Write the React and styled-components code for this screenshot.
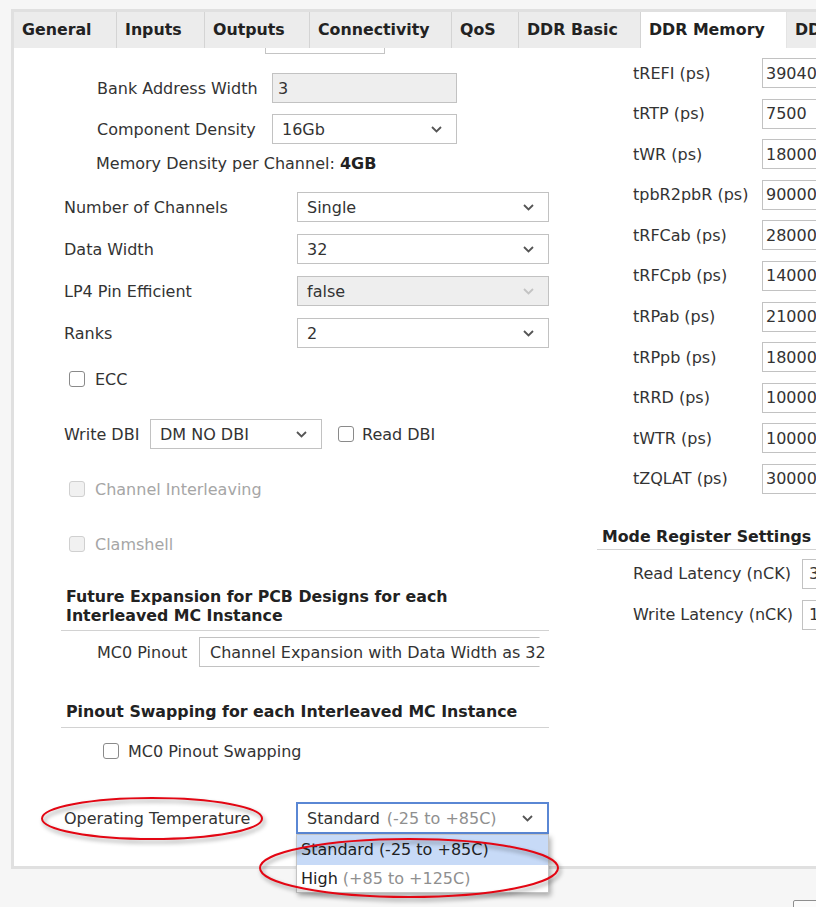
import React from 'react';
import styled, { createGlobalStyle } from 'styled-components';

const GlobalStyle = createGlobalStyle`
  html, body {
    margin: 0;
    padding: 0;
    background: #f6f6f6;
    overflow: hidden;
  }
  body {
    font-family: "DejaVu Sans", Verdana, sans-serif;
    font-size: 16px;
    color: #333;
  }
`;

const Page = styled.div`
  position: relative;
  width: 816px;
  height: 907px;
  padding: 9px 0 0 11px;
  box-sizing: border-box;
  overflow: hidden;
`;

const Panel = styled.div`
  width: 900px;
  border: 3px solid #e0e0e0;
  border-right: none;
  background: #fff;
`;

const TabBar = styled.div`
  display: flex;
  height: 36px;
  background: #ececec;
`;

const Tab = styled.div`
  flex: none;
  width: ${(p) => p.$w}px;
  box-sizing: border-box;
  padding-left: 8px;
  line-height: 36px;
  font-weight: bold;
  font-size: 15.8px;
  color: #222;
  white-space: nowrap;
  background: ${(p) => (p.$active ? '#fff' : 'transparent')};
  border-right: 1px solid ${(p) => (p.$active ? '#e4e4e4' : '#d4d4d4')};
`;

const Content = styled.div`
  display: flex;
  height: 818px;
`;

const LeftColumn = styled.div`
  width: 587px;
  flex: none;
`;

const RightColumn = styled.div`
  flex: 1;
  padding-top: 10px;
`;

const CutField = styled.div`
  margin-left: 251px;
  width: 120px;
  height: 6px;
  border: 1px solid #c4c4c4;
  border-top: none;
  box-sizing: border-box;
`;

const Row = styled.div`
  display: flex;
  align-items: center;
  height: ${(p) => p.$h || 30}px;
  margin-top: ${(p) => p.$mt || 0}px;
  padding-left: ${(p) => p.$indent || 0}px;
  white-space: nowrap;
`;

const Label = styled.span`
  flex: none;
  width: ${(p) => (p.$w ? `${p.$w}px` : 'auto')};
  color: ${(p) => (p.$disabled ? '#a6a6a6' : '#333')};
`;

const Field = styled.div`
  flex: none;
  position: relative;
  display: flex;
  align-items: center;
  justify-content: space-between;
  box-sizing: border-box;
  width: ${(p) => p.$w}px;
  height: ${(p) => p.$h || 30}px;
  padding: 0 14px 0 ${(p) => p.$pad ?? 9}px;
  border: ${(p) => (p.$focus ? '2px solid #5a87d4' : '1px solid #c2c2c2')};
  border-right-color: ${(p) => (p.$open ? 'transparent' : p.$focus ? '#5a87d4' : '#c2c2c2')};
  background: ${(p) => (p.$disabled ? '#eeeeee' : '#fff')};
  color: #333;
`;

const Muted = styled.span`
  color: #8f8f8f;
  margin-left: ${(p) => p.$gap || 0}px;
`;

const Bold = styled.b`
  color: #222;
`;

const Box = styled.span`
  flex: none;
  width: 16px;
  height: 16px;
  box-sizing: border-box;
  border: 1.5px solid ${(p) => (p.$disabled ? '#d0d0d0' : '#8a8a8a')};
  border-radius: 3px;
  background: ${(p) => (p.$disabled ? '#f1f1f1' : '#fff')};
  margin-right: ${(p) => p.$gap || 10}px;
  margin-left: ${(p) => p.$left || 0}px;
`;

const Heading = styled.div`
  margin-top: ${(p) => p.$mt}px;
  margin-left: ${(p) => p.$left}px;
  width: ${(p) => p.$w}px;
  padding: 0 0 ${(p) => p.$pb || 5}px ${(p) => p.$pl || 5}px;
  box-sizing: border-box;
  border-bottom: 1px solid #d2d2d2;
  font-weight: bold;
  font-size: 15.8px;
  color: #222;
  line-height: 19px;
  white-space: nowrap;
`;

const SelectWrap = styled.div`
  position: relative;
`;

const Popup = styled.div`
  position: absolute;
  top: 100%;
  left: 0;
  width: 253px;
  box-sizing: border-box;
  border: 1px solid #c4c4c4;
  background: #fff;
  box-shadow: 2px 3px 5px rgba(0, 0, 0, 0.3);
  z-index: 2;
`;

const Option = styled.div`
  height: ${(p) => p.$h}px;
  line-height: ${(p) => p.$h}px;
  padding-left: 4px;
  background: ${(p) => (p.$selected ? '#c7daf7' : '#fff')};
  color: #222;
`;

const Footer = styled.div`
  padding: 31px 0 0 782px;
`;

const FooterButton = styled.div`
  width: 80px;
  height: 30px;
  border: 1px solid #8e8e8e;
  border-radius: 2px;
  background: #fbfbfb;
`;

const Annotation = styled.svg`
  position: absolute;
  left: ${(p) => p.$x}px;
  top: ${(p) => p.$y}px;
  overflow: visible;
  pointer-events: none;
  filter: drop-shadow(2px 3px 2px rgba(0, 0, 0, 0.4));
  z-index: 3;
`;

const Chevron = ({ disabled }) => (
  <svg width="11" height="7" viewBox="0 0 11 7">
    <polyline
      points="1,1 5.5,5.5 10,1"
      fill="none"
      stroke={disabled ? '#c3c3c3' : '#555'}
      strokeWidth="1.8"
    />
  </svg>
);

const Select = ({ w, value, disabled, children }) => (
  <Field $w={w} $disabled={disabled}>
    <span>{children || value}</span>
    <Chevron disabled={disabled} />
  </Field>
);

const Ellipse = ({ x, y, w, h }) => (
  <Annotation $x={x} $y={y} width={w} height={h}>
    <ellipse cx={w / 2} cy={h / 2} rx={w / 2 - 1} ry={h / 2 - 1} fill="none" stroke="#e30613" strokeWidth="2" />
  </Annotation>
);

const tabs = [
  { name: 'General', w: 103 },
  { name: 'Inputs', w: 88 },
  { name: 'Outputs', w: 105 },
  { name: 'Connectivity', w: 142 },
  { name: 'QoS', w: 67 },
  { name: 'DDR Basic', w: 122 },
  { name: 'DDR Memory', w: 146, active: true },
  { name: 'DDR Advanced', w: 150 },
];

const timings = [
  ['tREFI (ps)', '39040'],
  ['tRTP (ps)', '7500'],
  ['tWR (ps)', '18000'],
  ['tpbR2pbR (ps)', '90000'],
  ['tRFCab (ps)', '280000'],
  ['tRFCpb (ps)', '140000'],
  ['tRPab (ps)', '21000'],
  ['tRPpb (ps)', '18000'],
  ['tRRD (ps)', '10000'],
  ['tWTR (ps)', '10000'],
  ['tZQLAT (ps)', '30000'],
];

const App = () => (
  <Page>
    <GlobalStyle />
    <Panel>
      <TabBar>
        {tabs.map((t) => (
          <Tab key={t.name} $w={t.w} $active={t.active}>
            {t.name}
          </Tab>
        ))}
      </TabBar>
      <Content>
        <LeftColumn>
          <CutField />
          <Row $mt={19} $indent={83}>
            <Label $w={175}>Bank Address Width</Label>
            <Field $w={185} $pad={5} $disabled>3</Field>
          </Row>
          <Row $mt={11} $indent={83}>
            <Label $w={175}>Component Density</Label>
            <Select w={185} value="16Gb" />
          </Row>
          <Row $mt={9} $h={20} $indent={82}>
            <Label>
              Memory Density per Channel: <Bold>4GB</Bold>
            </Label>
          </Row>
          <Row $mt={19} $indent={50}>
            <Label $w={233}>Number of Channels</Label>
            <Select w={252} value="Single" />
          </Row>
          <Row $mt={12} $indent={50}>
            <Label $w={233}>Data Width</Label>
            <Select w={252} value="32" />
          </Row>
          <Row $mt={12} $indent={50}>
            <Label $w={233}>LP4 Pin Efficient</Label>
            <Select w={252} value="false" disabled />
          </Row>
          <Row $mt={12} $indent={50}>
            <Label $w={233}>Ranks</Label>
            <Select w={252} value="2" />
          </Row>
          <Row $mt={21} $h={20} $indent={55}>
            <Box />
            <Label>ECC</Label>
          </Row>
          <Row $mt={30} $indent={50}>
            <Label $w={86}>Write DBI</Label>
            <Select w={172} value="DM NO DBI" />
            <Box $left={16} $gap={8} />
            <Label>Read DBI</Label>
          </Row>
          <Row $mt={30} $h={20} $indent={55}>
            <Box $disabled />
            <Label $disabled>Channel Interleaving</Label>
          </Row>
          <Row $mt={35} $h={20} $indent={55}>
            <Box $disabled />
            <Label $disabled>Clamshell</Label>
          </Row>
          <Heading $mt={33} $left={47} $w={488} $pl={5} $pb={5}>
            Future Expansion for PCB Designs for each
            <br />
            Interleaved MC Instance
          </Heading>
          <Row $mt={6} $indent={83}>
            <Label $w={102}>MC0 Pinout</Label>
            <Field $w={341} $pad={10} $open>Channel Expansion with Data Width as 32</Field>
          </Row>
          <Heading $mt={35} $left={47} $w={488} $pl={5} $pb={6}>
            Pinout Swapping for each Interleaved MC Instance
          </Heading>
          <Row $mt={13} $h={20} $indent={89}>
            <Box $gap={9} />
            <Label>MC0 Pinout Swapping</Label>
          </Row>
          <Row $mt={41} $h={32} $indent={50}>
            <Label $w={232}>Operating Temperature</Label>
            <SelectWrap>
              <Field $w={253} $h={32} $pad={9} $focus>
                <span>
                  Standard<Muted $gap={7}>(-25 to +85C)</Muted>
                </span>
                <Chevron />
              </Field>
              <Popup>
                <Option $h={30} $selected>Standard (-25 to +85C)</Option>
                <Option $h={27}>
                  High <Muted>(+85 to +125C)</Muted>
                </Option>
              </Popup>
            </SelectWrap>
          </Row>
        </LeftColumn>
        <RightColumn>
          {timings.map(([label, value], i) => (
            <Row key={label} $mt={i ? 10.6 : 0} $indent={32}>
              <Label $w={129}>{label}</Label>
              <Field $w={90} $pad={3}>{value}</Field>
            </Row>
          ))}
          <Heading $mt={33} $left={-4} $w={260} $pl={0} $pb={3}>
            Mode Register Settings
          </Heading>
          <Row $mt={9} $indent={32}>
            <Label $w={169}>Read Latency (nCK)</Label>
            <Field $w={60} $pad={6}>36</Field>
          </Row>
          <Row $mt={11} $indent={32}>
            <Label $w={169}>Write Latency (nCK)</Label>
            <Field $w={60} $pad={6}>18</Field>
          </Row>
        </RightColumn>
      </Content>
    </Panel>
    <Footer>
      <FooterButton />
    </Footer>
    <Ellipse x={41} y={797} w={222} h={43} />
    <Ellipse x={259} y={838} w={300} h={60} />
  </Page>
);

export default App;
